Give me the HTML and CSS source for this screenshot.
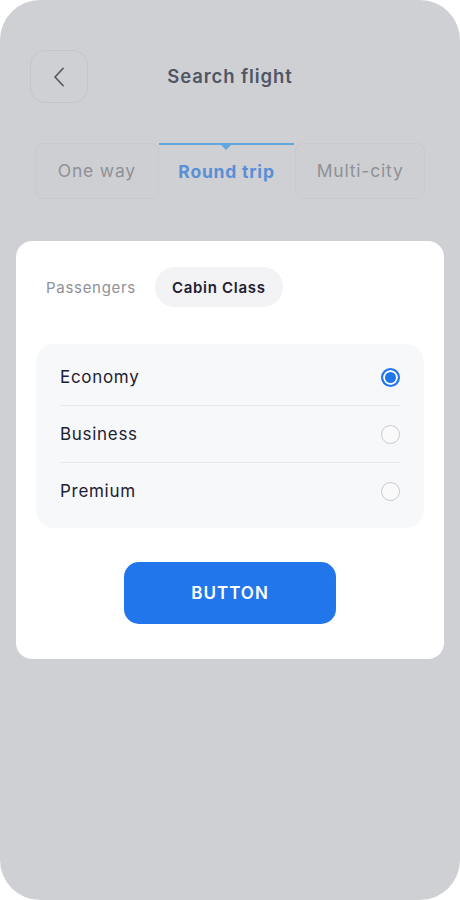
FILE: index.html
```html
<!DOCTYPE html>
<html lang="en">
<head>
    <meta charset="UTF-8">
    <meta name="viewport" content="width=device-width, initial-scale=1.0">
    <title>Search flight</title>
    <link rel="stylesheet" href="styles.css">
</head>
<body>

    <div class="phone">

        <div class="header">
            <button class="back">
                <svg width="12" height="20" viewBox="0 0 12 20" fill="none">
                    <path d="M10 1.5 L2 10 L10 18.5" stroke="#555b66" stroke-width="1.8" stroke-linecap="round" stroke-linejoin="round"/>
                </svg>
            </button>
            <h1>Search flight</h1>
            <div></div>
        </div>

        <div class="trip-tabs">
            <div class="trip-tab one">One way</div>
            <div class="trip-tab active">Round trip</div>
            <div class="trip-tab multi">Multi-city</div>
        </div>

        <div class="card">
            <div class="segment">
                <span class="seg-item first">Passengers</span>
                <span class="seg-item selected">Cabin Class</span>
            </div>

            <ul class="class-list">
                <li class="class-item">Economy <span class="radio checked"></span></li>
                <li class="class-item">Business <span class="radio"></span></li>
                <li class="class-item">Premium <span class="radio"></span></li>
            </ul>

            <button class="main-btn">BUTTON</button>
        </div>

    </div>

</body>
</html>
```

FILE: styles.css
```css
body {
    margin: 0;
    background-color: #fff;
    font-family: 'Inter', 'Liberation Sans', sans-serif;
    letter-spacing: 0.7px;
}

.phone {
    width: 460px;
    height: 900px;
    background-color: #cfd0d4;
    border-radius: 40px;
    overflow: hidden;
    box-sizing: border-box;
    padding-top: 50px;
}

.header {
    display: grid;
    grid-template-columns: 58px 1fr 58px;
    align-items: center;
    margin: 0 30px;
}

.back {
    width: 58px;
    height: 53px;
    border: 1px solid #c4c6ca;
    border-radius: 15px;
    background-color: #cfd0d4;
    display: flex;
    align-items: center;
    justify-content: center;
    padding: 0;
}

.header h1 {
    margin: 0 0 1px;
    text-align: center;
    font-size: 18.5px;
    font-weight: 600;
    letter-spacing: 0.9px;
    color: #505663;
}

.trip-tabs {
    display: flex;
    margin: 40px 35px 0;
    height: 56px;
}

.trip-tab {
    display: flex;
    align-items: center;
    justify-content: center;
    padding-bottom: 2px;
    font-size: 17.5px;
    letter-spacing: 0.8px;
    color: #8f9196;
    box-sizing: border-box;
}

.trip-tab.one {
    width: 124px;
    border: 1px solid #c8cacd;
    border-radius: 8px;
    background-color: #cdcfd2;
}

.trip-tab.multi {
    width: 130px;
    margin-left: 1px;
    border: 1px solid #c8cacd;
    border-radius: 8px;
    background-color: #cdcfd2;
}

.trip-tab.active {
    position: relative;
    width: 136px;
    border-top: 2px solid #64a7dc;
    color: #5a8fd6;
    font-weight: 700;
}

.trip-tab.active::after {
    content: '';
    position: absolute;
    top: 0;
    left: 62px;
    border-left: 5px solid transparent;
    border-right: 5px solid transparent;
    border-top: 5px solid #64a7dc;
}

.card {
    margin: 42px 16px 0;
    background-color: #fff;
    border-radius: 16px;
    padding: 26px 20px 35px;
}

.segment {
    display: flex;
    gap: 2px;
}

.seg-item {
    height: 40px;
    padding: 0 17px;
    border-radius: 20px;
    display: flex;
    align-items: center;
    font-size: 15px;
    color: #8e9198;
}

.seg-item.first {
    padding-left: 10px;
}

.seg-item.selected {
    background-color: #f3f3f5;
    color: #1c2033;
    font-weight: 600;
}

.class-list {
    list-style: none;
    margin: 37px 0 0;
    padding: 5px 24px 9px;
    background-color: #f7f8fa;
    border-radius: 18px;
}

.class-item {
    height: 56px;
    display: flex;
    align-items: center;
    justify-content: space-between;
    font-size: 17px;
    color: #1d2133;
    border-bottom: 1px solid #e8e9ec;
}

.class-item:last-child {
    border-bottom: none;
}

.radio {
    width: 19px;
    height: 19px;
    border: 1px solid #c9cacd;
    border-radius: 50%;
    box-sizing: border-box;
    background-color: #fafafb;
}

.radio.checked {
    border: 2px solid #2176eb;
    background-color: #2176eb;
    box-shadow: inset 0 0 0 2px #fff;
}

.main-btn {
    display: block;
    width: 212px;
    height: 62px;
    margin: 34px auto 0;
    border: none;
    border-radius: 15px;
    background-color: #2176eb;
    color: #fff;
    font-family: inherit;
    font-size: 17px;
    font-weight: 600;
    letter-spacing: 1px;
}
```
